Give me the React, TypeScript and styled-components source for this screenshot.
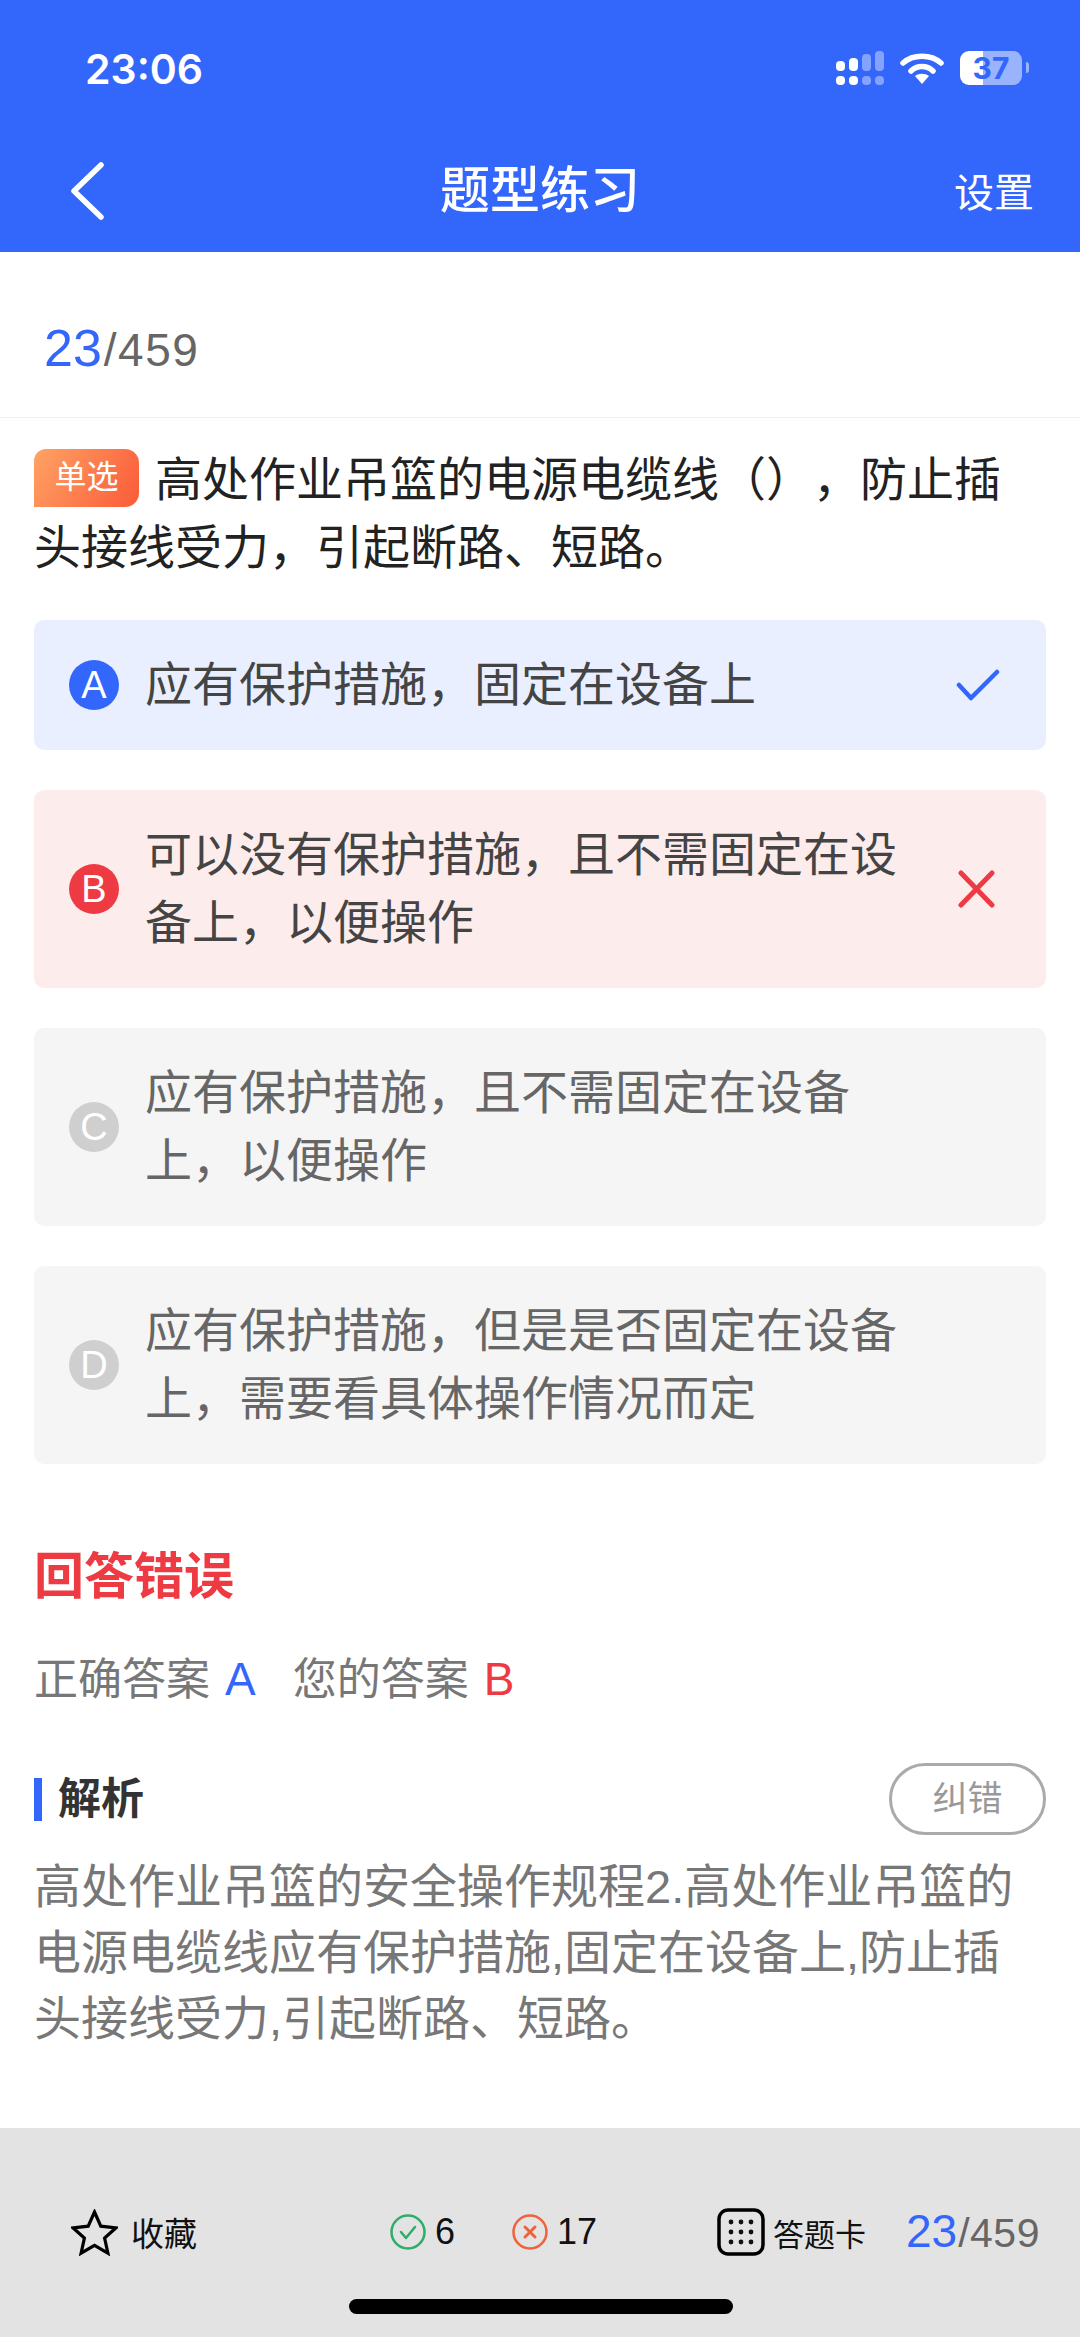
import styled, { createGlobalStyle } from 'styled-components'

const BLUE = '#3366fa'
const RED = '#ee3b43'
const FONT = '"Liberation Sans", "Noto Sans CJK SC", sans-serif'

type Tone = 'right' | 'wrong' | 'idle'

const toneBg: Record<Tone, string> = { right: '#e9effe', wrong: '#fdecec', idle: '#f5f5f5' }
const toneCircle: Record<Tone, string> = { right: BLUE, wrong: RED, idle: '#cfcfcf' }
const toneText: Record<Tone, string> = { right: '#444', wrong: '#444', idle: '#666' }

const Global = createGlobalStyle`
  html, body {
    margin: 0;
    padding: 0;
    background: #fff;
  }
  * {
    box-sizing: border-box;
  }
`

const Page = styled.div`
  width: 1080px;
  height: 2337px;
  display: flex;
  flex-direction: column;
  overflow: hidden;
  background: #fff;
  font-family: ${FONT};
  text-spacing-trim: space-all;
`

const Header = styled.header`
  height: 252px;
  background: ${BLUE};
  color: #fff;
  display: flex;
  flex-direction: column;
`

const StatusBar = styled.div`
  height: 140px;
  padding: 48px 58px 0 85px;
  display: flex;
  justify-content: space-between;
  align-items: flex-start;
`

const Time = styled.span`
  margin-top: 1px;
  font-family: Inter, sans-serif;
  font-size: 41px;
  line-height: 40px;
  font-weight: 600;
`

const StatusIcons = styled.div`
  display: flex;
  align-items: center;
  height: 40px;
  gap: 16px;
`

const Battery = styled.div`
  position: relative;
  width: 62px;
  height: 34px;
  border-radius: 9px;
  background: linear-gradient(90deg, #fff 0 37%, rgba(255, 255, 255, 0.5) 37% 100%);
  color: ${BLUE};
  font-family: Inter, sans-serif;
  font-size: 30px;
  line-height: 34px;
  font-weight: 700;
  text-align: center;

  &::after {
    content: '';
    position: absolute;
    right: -7px;
    top: 11px;
    width: 3px;
    height: 11px;
    border-radius: 0 3px 3px 0;
    background: rgba(255, 255, 255, 0.5);
  }
`

const NavBar = styled.nav`
  flex: 1;
  position: relative;
  display: flex;
  align-items: flex-start;
  justify-content: space-between;
  padding: 20px 46px 0 68px;
`

const Title = styled.h1`
  position: absolute;
  left: 0;
  right: 0;
  top: 21px;
  margin: 0;
  text-align: center;
  font-size: 50px;
  line-height: 60px;
  font-weight: 500;
`

const NavAction = styled.span`
  font-size: 40px;
  line-height: 56px;
  margin-top: 5px;
`

const Counter = styled.div`
  height: 166px;
  padding: 64px 0 0 44px;
  border-bottom: 1px solid #f2f2f2;
  display: flex;
  align-items: baseline;
`

const CountNow = styled.span<{ $small?: boolean }>`
  color: ${BLUE};
  font-size: ${p => (p.$small ? 46 : 52)}px;
  line-height: 64px;
`

const CountAll = styled.span<{ $small?: boolean }>`
  margin-left: ${p => (p.$small ? 1 : 2)}px;
  color: #666;
  font-size: ${p => (p.$small ? 41 : 46)}px;
  line-height: 64px;
  letter-spacing: ${p => (p.$small ? 0.5 : 1.5)}px;
`

const Question = styled.p`
  margin: 28px 34px 0;
  font-size: 47px;
  line-height: 68px;
  color: #222;
`

const Tag = styled.span`
  display: inline-block;
  width: 105px;
  height: 58px;
  margin-right: 16px;
  vertical-align: 8px;
  text-align: center;
  font-size: 32px;
  line-height: 56px;
  color: #fff;
  border-radius: 12px 14px 14px 0;
  background: linear-gradient(120deg, #ffa364, #fa5a38);
`

const Options = styled.div`
  margin: 38px 34px 0;
  display: flex;
  flex-direction: column;
  gap: 40px;
`

const Option = styled.div<{ $tone: Tone }>`
  min-height: 130px;
  padding: 31px 46px 31px 35px;
  border-radius: 10px;
  background: ${p => toneBg[p.$tone]};
  display: flex;
  align-items: center;
`

const Letter = styled.span<{ $tone: Tone }>`
  flex: none;
  width: 50px;
  height: 50px;
  border-radius: 50%;
  background: ${p => toneCircle[p.$tone]};
  color: #fff;
  font-size: 38px;
  line-height: 50px;
  text-align: center;
`

const OptionText = styled.span<{ $tone: Tone }>`
  width: 760px;
  margin-left: 26px;
  font-size: 47px;
  line-height: 68px;
  color: ${p => toneText[p.$tone]};
`

const Mark = styled.svg`
  margin-left: auto;
  flex: none;
`

const Verdict = styled.h2`
  margin: 78px 34px 0;
  font-size: 50px;
  line-height: 70px;
  font-weight: 700;
  color: ${RED};
`

const Answers = styled.div`
  margin: 37px 34px 0;
  display: flex;
  gap: 37px;
  font-size: 44px;
  line-height: 60px;
  color: #777;
`

const AnswerLetter = styled.span<{ $color: string }>`
  margin-left: 15px;
  font-size: 46px;
  color: ${p => p.$color};
`

const AnalysisHead = styled.div`
  margin: 53px 34px 0;
  display: flex;
  align-items: center;
  justify-content: space-between;
`

const AnalysisTitle = styled.h3`
  margin: 0;
  padding-left: 16px;
  border-left: 8px solid ${BLUE};
  font-size: 43px;
  line-height: 43px;
  font-weight: 700;
  color: #333;
`

const FixButton = styled.span`
  width: 157px;
  height: 72px;
  border: 3px solid #aaa;
  border-radius: 36px;
  color: #999;
  font-size: 35px;
  line-height: 66px;
  text-align: center;
`

const Explain = styled.p`
  margin: 19px 34px 0;
  font-size: 47px;
  line-height: 66px;
  color: #777;
`

const Bottom = styled.footer`
  margin-top: auto;
  height: 209px;
  padding-top: 70px;
  background: #e3e3e3;
  display: flex;
  flex-direction: column;
`

const BottomRow = styled.div`
  height: 68px;
  padding-left: 71px;
  display: grid;
  grid-template-columns: 319px 327px 189px auto;
  align-items: center;
`

const BottomItem = styled.div<{ $gap: number; $size: number }>`
  display: flex;
  align-items: center;
  gap: ${p => p.$gap}px;
  color: #111;
  font-size: ${p => p.$size}px;
`

const Stats = styled.div`
  display: flex;
  align-items: center;
  gap: 9px;
  color: #111;
  font-size: 36px;
`

const StatNum = styled.span`
  width: 68px;
`

const BottomCount = styled.div`
  display: flex;
  align-items: baseline;
`

const HomeBar = styled.div`
  width: 384px;
  height: 15px;
  margin: 33px 0 0 349px;
  border-radius: 8px;
  background: #000;
`

const options: { letter: string; tone: Tone; text: string }[] = [
  { letter: 'A', tone: 'right', text: '应有保护措施，固定在设备上' },
  { letter: 'B', tone: 'wrong', text: '可以没有保护措施，且不需固定在设备上，以便操作' },
  { letter: 'C', tone: 'idle', text: '应有保护措施，且不需固定在设备上，以便操作' },
  { letter: 'D', tone: 'idle', text: '应有保护措施，但是是否固定在设备上，需要看具体操作情况而定' },
]

function SignalIcon () {
  const cols = [
    { x: 0, top: 10, o: 1 },
    { x: 13, top: 7, o: 1 },
    { x: 26, top: 3, o: 0.4 },
    { x: 39, top: 0, o: 0.4 },
  ]
  return (
    <svg width="48" height="34" viewBox="0 0 48 34">
      {cols.map(c => (
        <g key={c.x} fill="#fff" opacity={c.o}>
          <rect x={c.x} y={c.top} width="9" height={20 - c.top} rx="4" />
          <rect x={c.x} y="25" width="9" height="9" rx="4" />
        </g>
      ))}
    </svg>
  )
}

function WifiIcon () {
  return (
    <svg width="44" height="32" viewBox="0 0 44 32">
      <path d="M3 11 C13 2 31 2 41 11" fill="none" stroke="#fff" strokeWidth="5.5" strokeLinecap="round" />
      <path d="M11 19 C17 13 27 13 33 19" fill="none" stroke="#fff" strokeWidth="5.5" strokeLinecap="round" />
      <path d="M15 24 C19 21 25 21 29 24 L22 32 Z" fill="#fff" />
    </svg>
  )
}

export default function App () {
  return (
    <Page>
      <Global />
      <Header>
        <StatusBar>
          <Time>23:06</Time>
          <StatusIcons>
            <SignalIcon />
            <WifiIcon />
            <Battery>37</Battery>
          </StatusIcons>
        </StatusBar>
        <NavBar>
          <svg width="38" height="62" viewBox="0 0 38 62">
            <path d="M33 5 L6 31 L33 57" fill="none" stroke="#fff" strokeWidth="5.5" strokeLinecap="round" strokeLinejoin="round" />
          </svg>
          <Title>题型练习</Title>
          <NavAction>设置</NavAction>
        </NavBar>
      </Header>

      <Counter>
        <CountNow>23</CountNow>
        <CountAll>/459</CountAll>
      </Counter>

      <Question>
        <Tag>单选</Tag>高处作业吊篮的电源电缆线（），防止插头接线受力，引起断路、短路。
      </Question>

      <Options>
        {options.map(o => (
          <Option key={o.letter} $tone={o.tone}>
            <Letter $tone={o.tone}>{o.letter}</Letter>
            <OptionText $tone={o.tone}>{o.text}</OptionText>
            {o.tone === 'right' && (
              <Mark width="44" height="32" viewBox="0 0 44 32">
                <path d="M3 16 L15 29 L41 3" fill="none" stroke={BLUE} strokeWidth="4.5" strokeLinecap="round" strokeLinejoin="round" />
              </Mark>
            )}
            {o.tone === 'wrong' && (
              <Mark width="44" height="38" viewBox="0 0 44 38">
                <path d="M5 3 L36 35 M36 3 L5 35" fill="none" stroke={RED} strokeWidth="5" strokeLinecap="round" />
              </Mark>
            )}
          </Option>
        ))}
      </Options>

      <Verdict>回答错误</Verdict>
      <Answers>
        <span>正确答案<AnswerLetter $color={BLUE}>A</AnswerLetter></span>
        <span>您的答案<AnswerLetter $color={RED}>B</AnswerLetter></span>
      </Answers>

      <AnalysisHead>
        <AnalysisTitle>解析</AnalysisTitle>
        <FixButton>纠错</FixButton>
      </AnalysisHead>
      <Explain>高处作业吊篮的安全操作规程2.高处作业吊篮的电源电缆线应有保护措施,固定在设备上,防止插头接线受力,引起断路、短路。</Explain>

      <Bottom>
        <BottomRow>
          <BottomItem $gap={13} $size={33}>
            <svg width="47" height="47" viewBox="0 0 47 47">
              <path d="M23.5 3 L29.8 17.2 L45 18.8 L33.6 29 L36.9 44.2 L23.5 36.4 L10.1 44.2 L13.4 29 L2 18.8 L17.2 17.2 Z" fill="none" stroke="#000" strokeWidth="3.2" strokeLinejoin="miter" />
            </svg>
            收藏
          </BottomItem>
          <Stats>
            <svg width="36" height="36" viewBox="0 0 36 36">
              <circle cx="18" cy="18" r="16.5" fill="none" stroke="#2eae66" strokeWidth="2.5" />
              <path d="M11 18 L16 24 L25 13" fill="none" stroke="#2eae66" strokeWidth="2.5" strokeLinecap="round" strokeLinejoin="round" />
            </svg>
            <StatNum>6</StatNum>
            <svg width="36" height="36" viewBox="0 0 36 36">
              <circle cx="18" cy="18" r="16.5" fill="none" stroke="#f0623e" strokeWidth="2.5" />
              <path d="M13 13 L23 23 M23 13 L13 23" fill="none" stroke="#f0623e" strokeWidth="3" strokeLinecap="round" />
            </svg>
            <span>17</span>
          </Stats>
          <BottomItem $gap={8} $size={31}>
            <svg width="48" height="48" viewBox="0 0 48 48">
              <rect x="2" y="2" width="44" height="44" rx="9" fill="none" stroke="#000" strokeWidth="3.5" />
              {[14, 24, 34].map(y => [14, 24, 34].map(x => (
                <circle key={`${x}-${y}`} cx={x} cy={y} r="2.4" fill="#111" />
              )))}
            </svg>
            答题卡
          </BottomItem>
          <BottomCount>
            <CountNow $small>23</CountNow>
            <CountAll $small>/459</CountAll>
          </BottomCount>
        </BottomRow>
        <HomeBar />
      </Bottom>
    </Page>
  )
}
